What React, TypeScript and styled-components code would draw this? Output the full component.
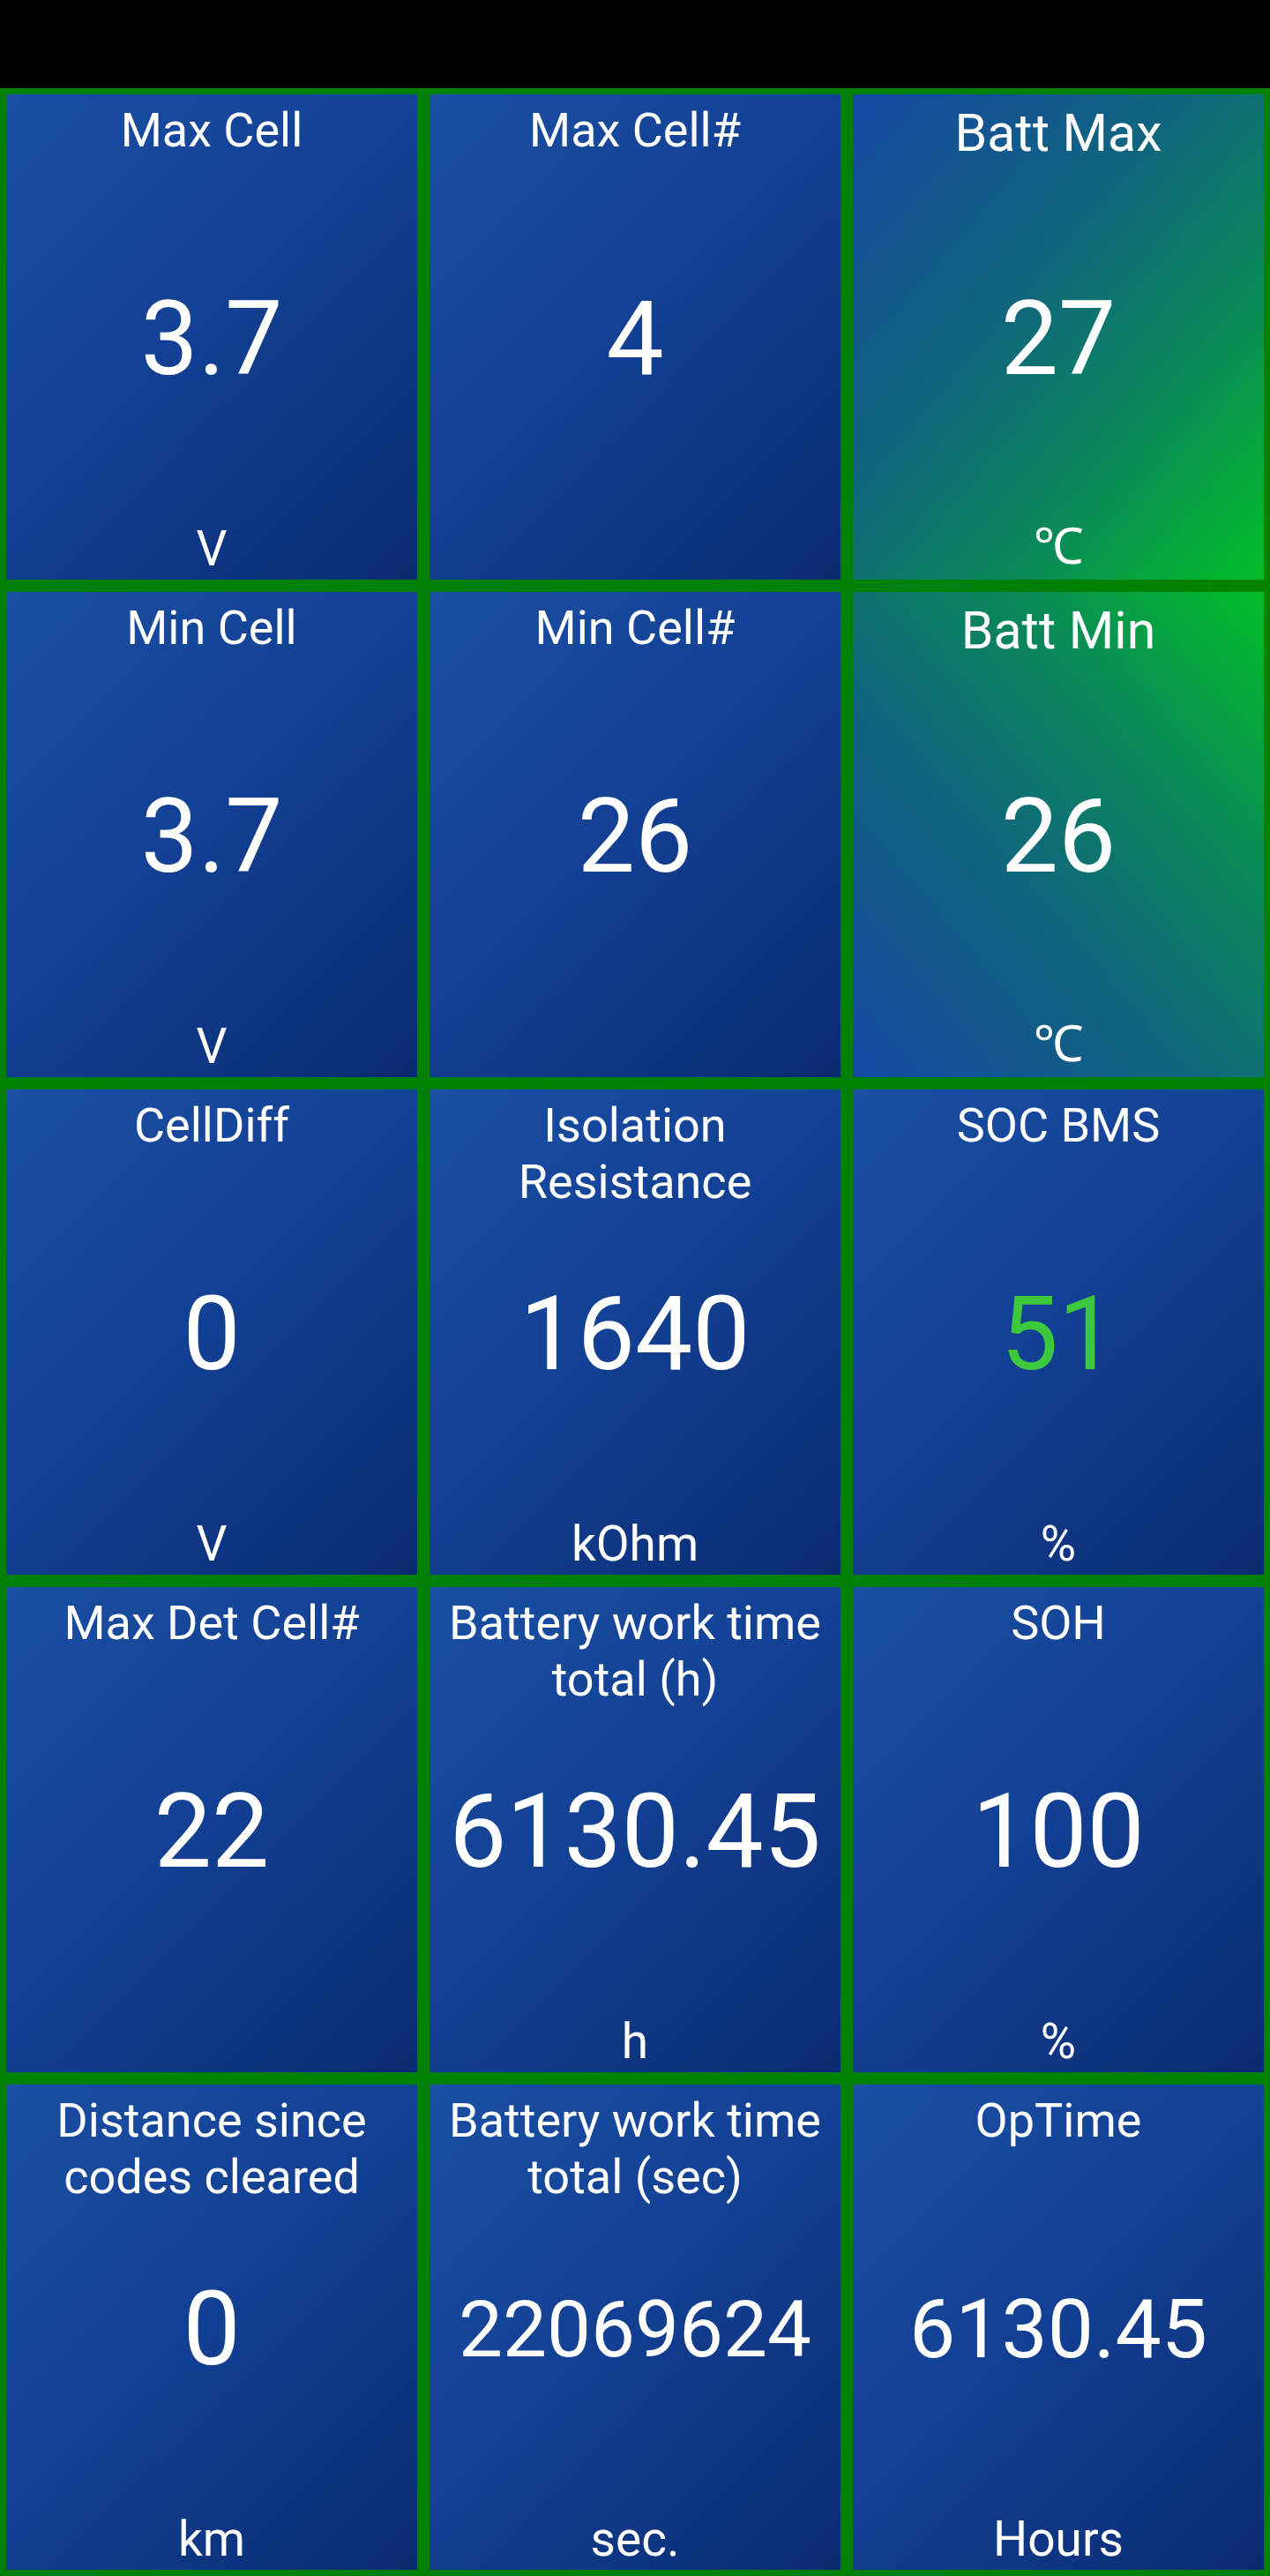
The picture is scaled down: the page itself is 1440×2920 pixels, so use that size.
import React from "react";
import styled, { createGlobalStyle, css } from "styled-components";

const GlobalStyle = createGlobalStyle`
  html, body {
    margin: 0;
    padding: 0;
    background: #000;
  }
  body {
    font-family: Roboto, "Noto Sans", "Liberation Sans", sans-serif;
    color: #fff;
  }
`;

type Tone = "blue" | "hot" | "cool";

type Tile = {
  title: string;
  value: string;
  unit?: string;
  tone?: Tone;
  big?: boolean;
  valueSize?: number;
  valueColor?: string;
};

const tiles: Tile[] = [
  { title: "Max Cell", value: "3.7", unit: "V" },
  { title: "Max Cell#", value: "4" },
  { title: "Batt Max", value: "27", unit: "℃", tone: "hot", big: true },
  { title: "Min Cell", value: "3.7", unit: "V" },
  { title: "Min Cell#", value: "26" },
  { title: "Batt Min", value: "26", unit: "℃", tone: "cool", big: true },
  { title: "CellDiff", value: "0", unit: "V" },
  { title: "Isolation Resistance", value: "1640", unit: "kOhm" },
  { title: "SOC BMS", value: "51", unit: "%", valueColor: "#3ec83e" },
  { title: "Max Det Cell#", value: "22" },
  { title: "Battery work time total (h)", value: "6130.45", unit: "h" },
  { title: "SOH", value: "100", unit: "%" },
  { title: "Distance since codes cleared", value: "0", unit: "km" },
  { title: "Battery work time total (sec)", value: "22069624", unit: "sec.", valueSize: 89 },
  { title: "OpTime", value: "6130.45", unit: "Hours", valueSize: 93 },
];

const backgrounds: Record<Tone, ReturnType<typeof css>> = {
  blue: css`
    background: linear-gradient(135deg, #1a4fa3 0%, #123f92 50%, #0b2b70 100%);
  `,
  hot: css`
    background: linear-gradient(
      to bottom right,
      #1548a3 0%,
      #10657e 40%,
      #0a8a58 70%,
      #03bf28 100%
    );
  `,
  cool: css`
    background: linear-gradient(
      to top right,
      #1548a3 0%,
      #10657e 40%,
      #0a8a58 70%,
      #03bf28 100%
    );
  `,
};

const Screen = styled.div`
  width: 1440px;
  background: #000;
`;

const StatusBar = styled.div`
  height: 100px;
  background: #000;
`;

const Grid = styled.div`
  display: grid;
  grid-template-columns: repeat(3, 1fr);
  grid-auto-rows: 564px;
`;

const Card = styled.div<{ $tone: Tone }>`
  border: 7px solid #028002;
  display: grid;
  grid-template-rows: 1fr auto 1fr;
  text-align: center;
  padding: 9px 8px 3px;
  overflow: hidden;
  ${(p) => backgrounds[p.$tone]}
`;

const Title = styled.div<{ $big?: boolean }>`
  align-self: start;
  font-size: ${(p) => (p.$big ? 59 : 54)}px;
  line-height: 1.18;
`;

const Value = styled.div<{ $size: number; $color: string }>`
  align-self: center;
  font-size: ${(p) => p.$size}px;
  line-height: 1.17;
  color: ${(p) => p.$color};
`;

const Unit = styled.div<{ $big?: boolean }>`
  align-self: end;
  font-size: ${(p) => (p.$big ? 57 : 55)}px;
  line-height: 1.17;
`;

export default function App() {
  return (
    <Screen>
      <GlobalStyle />
      <StatusBar />
      <Grid>
        {tiles.map((t, i) => (
          <Card key={i} $tone={t.tone ?? "blue"}>
            <Title $big={t.big}>{t.title}</Title>
            <Value $size={t.valueSize ?? 116} $color={t.valueColor ?? "#fff"}>
              {t.value}
            </Value>
            <Unit $big={t.big}>{t.unit ?? ""}</Unit>
          </Card>
        ))}
      </Grid>
    </Screen>
  );
}
